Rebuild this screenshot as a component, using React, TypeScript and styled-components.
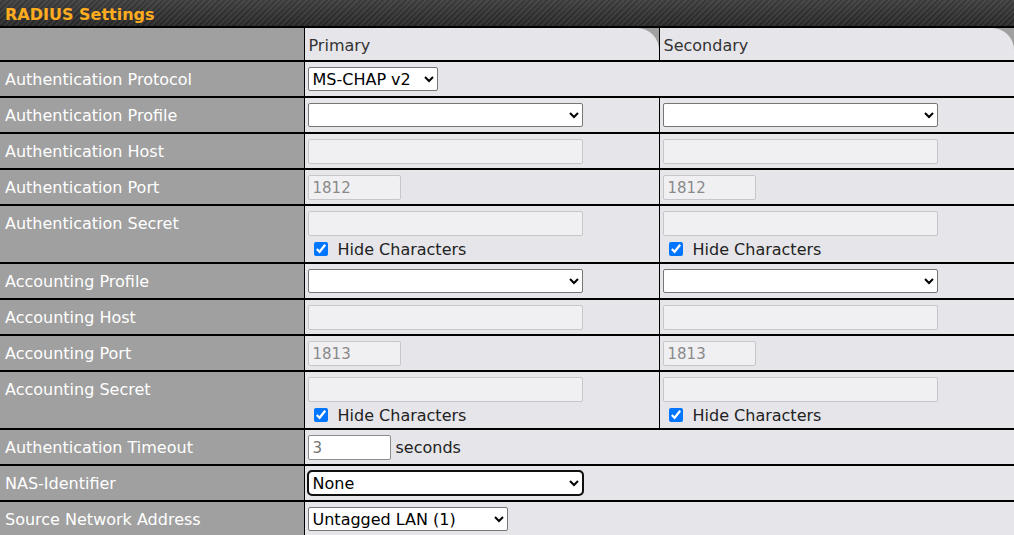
import React from 'react'
import styled, { createGlobalStyle } from 'styled-components'

const GlobalStyle = createGlobalStyle`
  html, body {
    margin: 0;
    padding: 0;
    background: #e6e6ea;
  }
  body {
    font-family: "DejaVu Sans", Verdana, sans-serif;
    font-size: 16px;
  }
`

const Panel = styled.div`
  width: 1014px;
  background: #a0a0a0;
`

const TitleBar = styled.div`
  height: 28px;
  padding: 2px 0 0 5px;
  box-sizing: border-box;
  display: flex;
  align-items: center;
  border-bottom: 2px solid #000;
  background:
    repeating-linear-gradient(135deg, rgba(255, 255, 255, 0.07) 0 2px, rgba(0, 0, 0, 0) 2px 4px),
    linear-gradient(#3c3c3c, #262626);
  color: #ffad1f;
  font-weight: bold;
  font-size: 16px;
`

const Table = styled.table`
  width: 100%;
  border-collapse: collapse;
  table-layout: fixed;
`

const LabelCell = styled.td`
  padding: 8px 0 0 5px;
  vertical-align: top;
  box-sizing: border-box;
  background: #a0a0a0;
  color: #fff;
  border-right: 1px solid #000;
  border-bottom: 2px solid #000;
  line-height: 20px;
`

const ValueCell = styled.td`
  padding: 5px 3px 3px 3px;
  height: 36px;
  box-sizing: border-box;
  vertical-align: top;
  background: #e6e6ea;
  color: #222;
  border-bottom: 2px solid #000;
  & + & {
    border-left: 1px solid #000;
  }
`

const HeaderCell = styled.th`
  height: 32px;
  padding: 0 4px;
  text-align: left;
  font-weight: normal;
  color: #333;
  background: #a0a0a0;
  border-bottom: 2px solid #000;
  & + & {
    border-left: 1px solid #000;
  }
`

const HeaderTab = styled.div`
  height: 32px;
  margin: 0 -4px;
  padding: 2px 4px 0;
  box-sizing: border-box;
  display: flex;
  align-items: center;
  background: #e6e6ea;
  border-top-right-radius: 22px;
`

const TextInput = styled.input<{ $w: number }>`
  box-sizing: border-box;
  width: ${p => p.$w}px;
  height: 25px;
  margin: 0;
  padding: 1px 4px;
  font-family: "DejaVu Sans", Verdana, sans-serif;
  font-size: 15px;
  color: #8a8a8a;
  background: #f0f0f3;
  border: 1px solid #c7c7c9;
  border-radius: 2px;
  &:enabled {
    background: #fff;
    border-color: #8d8d8d;
    color: #9a9a9a;
  }
`

const Select = styled.select<{ $w: number; $focus?: boolean }>`
  box-sizing: border-box;
  width: ${p => p.$w}px;
  height: 24px;
  margin: 0;
  font-family: "DejaVu Sans", Verdana, sans-serif;
  font-size: 16px;
  color: #000;
  background: #fff;
  border: 1px solid #767676;
  border-radius: 2px;
  outline: ${p => (p.$focus ? '2px solid #101010' : 'none')};
  outline-offset: -1px;
  ${p => p.$focus && 'border-radius: 4px;'}
`

const Inline = styled.div`
  display: flex;
  align-items: center;
  gap: 5px;
`

const CheckRow = styled.label`
  display: flex;
  align-items: center;
  gap: 10px;
  margin: 3px 0 0 6px;
  height: 20px;
  color: #222;
  input {
    margin: 0;
    width: 14px;
    height: 14px;
    accent-color: #0075ff;
  }
`

type Field =
  | { kind: 'select'; width: number; value?: string }
  | { kind: 'text'; width: number; value?: string }
  | { kind: 'secret' }

interface Row {
  label: string
  primary: Field
  secondary: Field
}

const rows: Row[] = [
  { label: 'Authentication Profile', primary: { kind: 'select', width: 275 }, secondary: { kind: 'select', width: 275 } },
  { label: 'Authentication Host', primary: { kind: 'text', width: 275 }, secondary: { kind: 'text', width: 275 } },
  { label: 'Authentication Port', primary: { kind: 'text', width: 93, value: '1812' }, secondary: { kind: 'text', width: 93, value: '1812' } },
  { label: 'Authentication Secret', primary: { kind: 'secret' }, secondary: { kind: 'secret' } },
  { label: 'Accounting Profile', primary: { kind: 'select', width: 275 }, secondary: { kind: 'select', width: 275 } },
  { label: 'Accounting Host', primary: { kind: 'text', width: 275 }, secondary: { kind: 'text', width: 275 } },
  { label: 'Accounting Port', primary: { kind: 'text', width: 93, value: '1813' }, secondary: { kind: 'text', width: 93, value: '1813' } },
  { label: 'Accounting Secret', primary: { kind: 'secret' }, secondary: { kind: 'secret' } },
]

const FieldControl: React.FC<{ field: Field }> = ({ field }) => {
  if (field.kind === 'select') {
    return (
      <Select $w={field.width}>
        <option value="">{field.value ?? ''}</option>
      </Select>
    )
  }
  if (field.kind === 'text') {
    return <TextInput $w={field.width} disabled defaultValue={field.value} />
  }
  return (
    <>
      <TextInput $w={275} disabled type="password" />
      <CheckRow>
        <input type="checkbox" defaultChecked />
        Hide Characters
      </CheckRow>
    </>
  )
}

export default function App() {
  return (
    <>
      <GlobalStyle />
      <Panel>
        <TitleBar>RADIUS Settings</TitleBar>
        <Table>
          <colgroup>
            <col style={{ width: 304 }} />
            <col style={{ width: 355 }} />
            <col />
          </colgroup>
          <thead>
            <tr>
              <LabelCell as="th" />
              <HeaderCell>
                <HeaderTab>Primary</HeaderTab>
              </HeaderCell>
              <HeaderCell>
                <HeaderTab>Secondary</HeaderTab>
              </HeaderCell>
            </tr>
          </thead>
          <tbody>
            <tr>
              <LabelCell>Authentication Protocol</LabelCell>
              <ValueCell colSpan={2}>
                <Select $w={130}>
                  <option>MS-CHAP v2</option>
                </Select>
              </ValueCell>
            </tr>
            {rows.map(row => (
              <tr key={row.label}>
                <LabelCell>{row.label}</LabelCell>
                <ValueCell>
                  <FieldControl field={row.primary} />
                </ValueCell>
                <ValueCell>
                  <FieldControl field={row.secondary} />
                </ValueCell>
              </tr>
            ))}
            <tr>
              <LabelCell>Authentication Timeout</LabelCell>
              <ValueCell colSpan={2}>
                <Inline>
                  <TextInput $w={83} placeholder="3" />
                  seconds
                </Inline>
              </ValueCell>
            </tr>
            <tr>
              <LabelCell>NAS-Identifier</LabelCell>
              <ValueCell colSpan={2}>
                <Select $w={275} $focus>
                  <option>None</option>
                </Select>
              </ValueCell>
            </tr>
            <tr>
              <LabelCell>Source Network Address</LabelCell>
              <ValueCell colSpan={2}>
                <Select $w={200}>
                  <option>Untagged LAN (1)</option>
                </Select>
              </ValueCell>
            </tr>
          </tbody>
        </Table>
      </Panel>
    </>
  )
}
